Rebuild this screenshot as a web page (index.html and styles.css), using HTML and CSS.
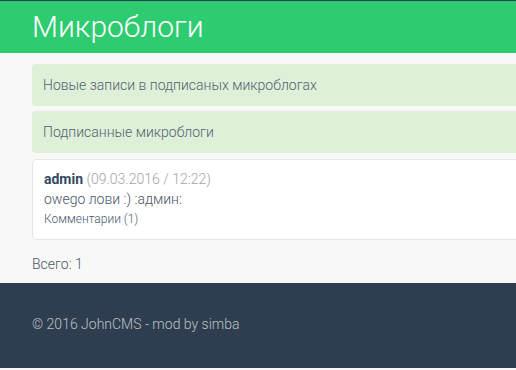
FILE: index.html
```html
<!DOCTYPE html>
<html lang="ru">
<head>
<meta charset="utf-8">
<title>Микроблоги</title>
<link rel="stylesheet" href="styles.css">
</head>
<body>
<header class="header">
  <h1 class="title">Микроблоги</h1>
</header>
<main class="content">
  <a class="menu-item" href="#">Новые записи в подписаных микроблогах</a>
  <a class="menu-item" href="#">Подписанные микроблоги</a>
  <div class="post">
    <div class="post-head"><span class="author">admin</span> <span class="date">(09.03.2016 / 12:22)</span></div>
    <div class="post-text">owego лови :) :админ:</div>
    <a class="post-comments" href="#">Комментарии (1)</a>
  </div>
  <div class="total">Всего: 1</div>
</main>
<footer class="footer">
  <div class="footer-text">© 2016 JohnCMS - mod by simba</div>
</footer>
</body>
</html>
```
FILE: styles.css
```css
html, body {
  margin: 0;
  padding: 0;
  overflow-x: hidden;
}
body {
  background: #f8f8f8;
  font-family: Roboto, "Liberation Sans", sans-serif;
  font-weight: 300;
  color: #4a5563;
}
.header {
  background: #2ecc71;
  border-top: 1px solid #2c3e50;
  height: 52px;
  display: flex;
  align-items: center;
  padding-left: 32px;
}
.title {
  margin: 0;
  font-weight: 300;
  font-size: 30px;
  color: #fff;
  line-height: 1;
}
.content {
  padding: 11px 0 9px 32px;
  width: 600px;
  display: flex;
  flex-direction: column;
}
.menu-item {
  display: block;
  background: #dff0d8;
  border-radius: 4px;
  padding: 12px 11px;
  font-size: 14px;
  line-height: 18px;
  color: #566070;
  text-decoration: none;
  margin-bottom: 5px;
}
.post {
  background: #fff;
  border: 1px solid #e6e6e6;
  border-radius: 4px;
  padding: 9px 11px 10px;
  margin-top: 1px;
}
.post-head {
  font-size: 14px;
  line-height: 20px;
}
.author {
  font-weight: 700;
  color: #34495e;
}
.date {
  color: #a4a4a4;
}
.post-text {
  font-size: 14px;
  line-height: 20px;
  color: #4a5563;
}
.post-comments {
  display: block;
  font-size: 12px;
  line-height: 20px;
  color: #4a5a6e;
  text-decoration: none;
}
.total {
  font-size: 14px;
  line-height: 20px;
  color: #4a5563;
  margin-top: 14px;
}
.footer {
  background: #2e3d4f;
  height: 85px;
  display: flex;
  align-items: center;
  padding-left: 32px;
}
.footer-text {
  font-size: 14px;
  color: #bdc3c7;
  margin-top: -4px;
}
```
